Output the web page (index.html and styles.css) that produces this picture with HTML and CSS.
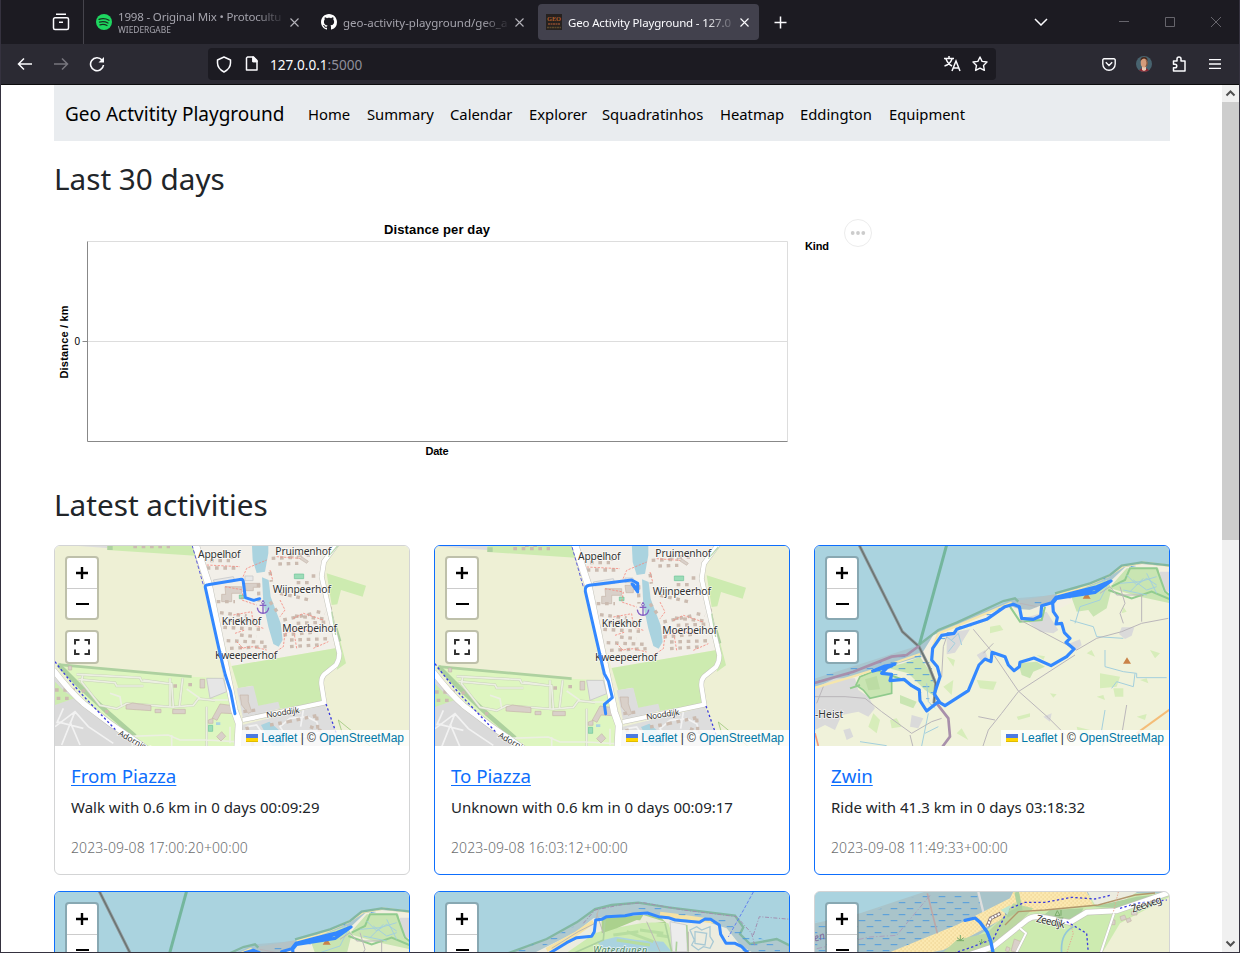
FILE: index.html
```html
<!DOCTYPE html>
<html lang="en">
<head>
<meta charset="utf-8">
<title>Geo Activity Playground</title>
<link rel="stylesheet" href="styles.css">
</head>
<body>
<svg class="defs" width="0" height="0" aria-hidden="true">
  <defs>
    <pattern id="tide" width="48" height="36" patternUnits="userSpaceOnUse"><path d="M2 8h20M26 26h20" stroke="#4294e0" stroke-width="2.6"/></pattern>
    <pattern id="dots" width="12" height="12" patternUnits="userSpaceOnUse"><path d="M2 3h2.5M8 9h2.5" stroke="#d9b56a" stroke-width="2.5"/></pattern>
    <symbol id="flag" viewBox="0 0 12 8"><path fill="#4C7BE1" d="M0 0h12v4H0z"/><path fill="#FFD500" d="M0 4h12v3H0z"/><path fill="#E0BC00" d="M0 7h12v1H0z"/></symbol>
    <symbol id="full" viewBox="0 0 16 16"><path d="M1 5.500V1h4.500M10.500 1H15v4.500M15 10.500V15h-4.500M5.500 15H1v-4.500" fill="none" stroke="#333" stroke-width="2"/></symbol>
    <symbol id="plus" viewBox="0 0 14 14"><path d="M7 1v12M1 7h12" stroke="#000" stroke-width="2.4"/></symbol>
    <symbol id="minus" viewBox="0 0 14 14"><path d="M1 7h13" stroke="#000" stroke-width="2"/></symbol>

    <g id="village">
      <path fill="#eef0d5" d="M0 0h1100v640H0z"/>
      <path fill="#dcdcdc" d="M0 0h172v24L0 12z"/>
      <path fill="#cdebb0" d="M172 0h258l18 48-276-18z"/>
      <path fill="#aed1a0" d="M172 16h16v14h-16z"/>
      <path class="b" d="M250 20h110M285 10h50"/>
      <path fill="#f2efe9" d="M435 0h430l-43 60-7 50 20 90 20 125-310 53-80-250z"/>
      <path fill="#cdebb0" d="M545 378l310-53 22 25-17 25-40 35 5 75-140 22-65-10-15-60-40 8z"/>
      <path fill="#cdebb0" d="M830 100l118 37-10 33-65-20-11 43-17 2zM870 300l18 70-28 20 8-40z"/>
      <path fill="#aed1a0" d="M862 262l12 40-8 5-10-40z"/>
      <path fill="#def6c0" d="M20 372l400 38 110 5 30 110-4 120H300L160 540 80 450z"/>
      <path d="M25 374l400 36" stroke="#aed1a0" stroke-width="8" fill="none"/>
      <path d="M25 374l70 70 80 75 80 70" stroke="#add19e" stroke-width="14" fill="none"/>
      <path fill="#dadada" d="M0 400l80 70 90 72 120 98H0z"/>
      <path fill="#cdebb0" d="M15 425l30 30 28 20-58 20z"/>
      <path fill="#ddd" d="M560 445l50-8 15 60 60-12 5 20-110 35zM575 555l250-60 30 75 25 70H570z"/>
      <path fill="#e6e6e6" stroke="#ccc" stroke-width="3" d="M470 415h50l10 40-50 20z"/>
      <path fill="none" stroke="#8cc068" stroke-width="2" d="M865 540l110 90M865 540l15 50"/>
      <path fill="#aad3df" d="M605 0h50v40l-10 55-25 4-12-39zM636 112l20 8 6 50 30 80 6 50-12 20-16-8-15-52-15-70zM633 555l25-10 40 35 10 60h-30z"/>
      <path fill="#9cdcb8" stroke="#6cc498" stroke-width="2" d="M733 102h28v14h-28zM568 165h14v11h-14zM475 556h13v18h-13z"/>
      <path fill="#aad3df" d="M498 547h13v8h-13zM648 198h10v9h-10z"/>
      <path class="pathcase" d="M80 403l190 10 5 10 90 8 5 70-140-10-30 15-50-10-55-70 3-22M85 418l110 10 5 10 80 0M280 420l70 10M360 415v85M398 415l-10 85M370 501l60-5 15-20 50 5M470 500v118"/>
      <path class="path" d="M80 403l190 10 5 10 90 8 5 70-140-10-30 15-50-10-55-70 3-22M85 418l110 10 5 10 80 0M280 420l70 10M360 415v85M398 415l-10 85M370 501l60-5 15-20 50 5M450 475l-40-28M180 460l30 10 5 30M470 500v118M215 590l140-5 35 15 80 0 85 5M490 480l50 0M247 585v35M365 585v35M540 560v50"/>
      <path class="lane" d="M15 560l60-45 40 45 75 50M40 505l-20 45M75 515l-40 100M20 545l80 20M60 545l30 70M590 560l30-5 20 30 5 40M690 560l30-25 50-5 30 15 10 30-30 15h-70zM760 510l-8 50"/>
      <path fill="#d9d0c9" stroke="#c5b5a9" stroke-width="2" d="M510 492l40 5-2 24-35-2-12 22-14-7zM228 495l20-6 55 8v15l-75-5zM315 508h18v10h-18zM368 508h38v13h-38zM450 418h14v26h-14zM525 140h50v20h-30v25h-30v-22h12zM585 130h45v12h-20v10h-22zM570 465h25v20l10 30-10 5-20-25zM755 50l20 14-5 6-20-13zM475 540l14-5v15h-14zM500 590l15-15 12 14-14 14zM55 378h10v12H55z"/>
      <path fill="#e8e8e8" stroke="#cfcfcf" stroke-width="3" d="M490 120l60-10 5 14-60 8zM585 108h24v14h-24z"/>
      <path class="b" d="M470 84h100M480 62h60M515 48l50 5M665 55l80-3M685 72l60-2M740 128h50M785 108h20M720 45h60M500 185h55M625 130l2 55M660 185l25 35M510 218l80 10M520 262l110 6M530 302l115 5M540 325l110-5M550 350l30-3M535 240l80 0M700 285l90-8M735 228l100 10M740 250l105-4M720 300l120-4M720 320l100-6M570 285l50 5M690 160l90 20M840 200l6 45M800 215l25 5M660 95l4 30M700 240l90-20"/>
      <path class="r" d="M470 75l100 5M575 120l15-35 60-25M525 140l55 10-5 30 45 15M690 180l15 30-15 20M550 225l55-10 5 40 30 10M555 280l30-10M570 325l40-5 40 10M670 340l30-20 5-40 60-15M730 235l30-15 60 20M740 325l-10-60 70 10M790 325l45-20M680 50l70 5M660 90l8 30M580 325l-20-20"/>
      <path class="b" d="M590 560l20 60M660 555l55-10M715 545l85-18M780 560l40 15M800 530l5 50M580 515l40-5M15 450h60M20 475h40M95 455l20-10M165 515h10M370 438h16M415 434h12"/>
      <path class="casing" style="stroke-width:23" d="M432 0l43 130 78 380 14 40-5 90"/>
      <path class="casing" style="stroke-width:16" d="M870 0l-48 65-7 45 20 90 33 140q0 20-10 35l-35 28q-12 12-8 35l8 50-245 52"/>
      <path class="casing" style="stroke-width:19" d="M10 390q50 65 90 100l80 60 130 90"/>
      <path class="way" style="stroke-width:20" d="M432 0l43 130 78 380 14 40-5 90"/>
      <path class="way" style="stroke-width:13" d="M870 0l-48 65-7 45 20 90 33 140q0 20-10 35l-35 28q-12 12-8 35l8 50-245 52"/>
      <path class="way" style="stroke-width:16" d="M10 390q50 65 90 100l80 60 130 90"/>
      <path class="cycle" d="M15 365q45 60 90 108l95 100M828 492l35 100"/>
      <path class="cycle thin" d="M422 0l38 135"/>
      <path d="M865 15l-30 35M845 215l12 70" stroke="#add19e" stroke-width="4" opacity=".8" fill="none"/>
      <path d="M639 192v27M622 203q2 16 17 17 15-1 17-17M629 196h20M639 180v5" fill="none" stroke="#8461c4" stroke-width="4"/><circle cx="639" cy="188" r="4" fill="none" stroke="#8461c4" stroke-width="3"/>
      <g class="lab"><text x="444" y="55" textLength="128">Appelhof</text><text x="676" y="45" textLength="168">Pruimenhof</text><text x="668" y="159" textLength="175">Wijnpeerhof</text><text x="515" y="255" textLength="119">Kriekhof</text><text x="697" y="277" textLength="164">Moerbeihof</text><text x="495" y="357" textLength="187">Kweepeerhof</text></g>
      <g class="lab small"><text transform="translate(650 534) rotate(-9)" textLength="100">Nooddijk</text><text transform="translate(203 585) rotate(29)">Adornisdijk</text></g>
    </g>

    <g id="coast">
      <path fill="#aad3df" d="M0 0h1100v640H0z"/>
      <path fill="#a9c6cf" d="M0 420l330-105 60-45 225-95 120-10 165-57 35-30 60-10 105 8v30L0 460z"/>
      <path fill="#b4c3c6" d="M620 183l115-20 10 20-100 30z"/>
      <path fill="#f2efe0" d="M0 445l130-35 200-60 40-65 65-25 160-65 50 20 90-35 160-50 50-48 50-10 110 10v560H0z"/>
      <path fill="#f0f2da" d="M0 455l350-90 40-80 210-80 130 10 160-80 220 20v480H0z"/>
      <path fill="#dadada" d="M15 445l60-30 60 0 10 35 30 20 20 35-20 25-30-15-50 10-20 45-30-15-30 15zM410 280l70-12-25 40-20 30-25 5zM640 235l70-20 35 55-15 10-40-5zM935 262l38 0-8 25-20 10-18-15zM500 345l25-15 10 30-20 5zM700 530l25-10-5 25zM100 570l20-5 10 25-20 10zM305 525l35 10-15 30-25-5zM780 310l30-12 5 18-30 25zM1050 95h40v60h-40z"/>
      <path fill="#c9e5b2" stroke="#8fca8c" stroke-width="5" d="M150 410l50-20 45 15v55l-65 15-20-25-22-15z"/>
      <path fill="#bcdca4" d="M165 418l35-10 10 40-35 3z"/>
      <path fill="#c9e5b2" d="M230 382l50-12 50-20 40 60 5 60-30-20-50-50-60-15zM270 465l50 20-10 20-40-15zM625 370l55-5 25 15-35 15-10 20-25-10zM780 160l110-40 15 25-15 60-40 25-15-20-35 5zM910 130l40-45 95 0 15 70 20 15v20l-90-20-90-25z"/>
      <path fill="none" stroke="#92cc8f" stroke-width="6" d="M905 140l40-20 15-35 80 0 25 70 20 15v10l-60-25-60 20-70-25M600 200l30 45 65-5 10-40M120 445l30-10M240 405l40 15 50 30"/>
      <path fill="#d7edba" d="M870 400l60 10-10 30-50 5zM910 445h30v25h-25zM400 440l30-20-5 45zM190 520l20 20-10 40-25-20zM500 420l60 5-10 25-40-5zM620 530l40-10v10l-35 10zM440 580l15-15 20 35zM830 340l15-10 10 20zM1020 330l30 10-15 15zM800 560l40 10-5 15-30-5zM720 460l20 3-10 10zM940 200l10 15-15 5zM540 260l30-5 10 15-40 10zM240 540l20-5 15 25-30 5zM860 470l20-5 5 15zM990 420l20-5 5 15zM980 530l30-8-5 18zM680 345l25 4-5 10zM410 350l25 10-5 20z"/>
      <path d="M0 448l130-39 70-22 130-45M365 330l20-50 50-20 170-72M740 165l60-15 95-42 45-30 60-10 100 12" fill="none" stroke="#f5e6ac" stroke-width="7"/>
      <path d="M330 312l55-42 55-22 140-65 35-8 10 10M735 160l105-30 60-25 35-28 60-10 90 10" fill="none" stroke="#82b8a3" stroke-width="7"/>
      <path fill="url(#tide)" d="M230 360l130-20 12 90-10 90-15-50-50-50-60-20zM0 415l330-88 10 20-340 90zM380 290l230-105 15 5-225 110zM640 195l95-25 10 10-90 20zM860 128l80-48 50-10v6l-50 10-60 45z"/>
      <path d="M140 0l137 275 50 45 30 60 20 50-5 60" fill="none" stroke="#8f9598" stroke-width="9"/>
      <path d="M140 0l137 275 50 45 30 60 20 50-5 60" fill="none" stroke="#65716e" stroke-width="3.500"/>
      <path d="M414 0l-86 315" stroke="#74b69d" stroke-width="9" fill="none"/>
      <path d="M0 433l130-38 115-45 45-5 37-27M380 490l35 45 5 55-30 40" fill="none" stroke="#a890ab" stroke-width="8"/>
      <path class="riv" d="M795 250l15-50 60-20 20-40-10-20M780 240l70 20 10 30 80 5M885 330l0 50 55 15 40 5v13l90 0M975 400l-5 40-50-15-15 20M410 290l25 20-20 25M425 300l20-20 10 35M350 430l5 55 20 20M150 605l80 12M345 580l40-20M355 520l-20 98M885 510l-10 60 10 30-15 30M950 105l30 30 30-20 30 20M970 120l40 30 30-10M930 130l60-5 50-15M960 155l40-40M940 150l70 15M1010 100l30 60"/>
      <path class="rd" d="M490 268l50 60 85 125 90 80 60 60M630 190l50 10M630 240l170 90 60-35 75-20 60-25 80-15M920 165l-20-25-30 20M920 165l75 0 0 80M940 250l-10-30 15-30-15-50M795 345l-170 110-50 65-40 50-20 60M40 440l-20 50M15 470l90 0 60 5 50 40 90 65 60-35 30-10M300 585l10 40M555 540l-50-10M950 495l-20 120M410 290l-10 30-5 90M520 340l30-30"/>
      <path d="M980 580l100-72" stroke="#f4bd78" stroke-width="6"/><path d="M15 580l10 38" stroke="#ee9a80" stroke-width="5"/>
      <path fill="#ca8348" d="M818 176l12-19 12 19zM939 371l12-19 12 19z"/>
      <text class="lab" x="15" y="533" textLength="85">-Heist</text>
    </g>
    <path id="zwinroute" class="route" style="stroke-width:9.500" d="M188 393L225 378 255 372 232 382 215 400 245 403 240 422 282 418 305 437 328 450 330 482 350 513 385 485 405 497 475 452 507 375 525 357 543 365 546 337 585 350 595 375 612 392 628 380 630 367 672 354 723 377 770 350 792 327 768 307 780 295 763 278 755 250 738 252 742 232 730 215 728 190 740 175 855 157 903 123 860 140 800 155 738 172 725 188 695 197 692 228 670 238 635 235 628 200 610 193 585 200 530 238 440 268 432 280 395 286 368 325 365 360 382 380 390 410 373 462 388 485M780 170L850 147 900 125M190 393L245 378"/>

    <g id="dunes">
      <path fill="#aad3df" d="M0 50h1100v620H0z"/>
      <path fill="#b0c9cf" stroke="#82b8a3" stroke-width="7" d="M220 255l130-48 90-50 55-40 50-12 80-7 90 14 200 25 25 35-10 20 30 30 80-15 40 20v60H220z"/>
      <path fill="#ececdf" d="M300 255l140-70 50-40 60-5 100-10 60 15 120 10 60 20 40 50 50 30z"/>
      <path fill="none" stroke="#f5e2a4" stroke-width="13" d="M350 240l90-50 50-35M690 132l50 6 110 16"/>
      <path fill="#cdebb0" d="M400 255l95-65 30-10 130-25 60 5 20 60v35z"/>
      <path fill="#abd18d" d="M515 145l120-10 50 0 25 25-90-10-60 25-45 15z"/>
      <path fill="#e8ead8" d="M640 135l65 20-80 5z"/>
      <path fill="#aad3df" d="M500 215l60-15 60 10 80 5 25 30H530z"/>
      <path fill="none" stroke="#b7dda0" stroke-width="9" d="M550 195l75-10M560 210l100 15M630 180l70 10M590 185l80 30M680 195l35 5"/>
      <path fill="#ececec" stroke="#cecece" stroke-width="3" d="M720 155l50 10 2 80h-45z"/>
      <path fill="none" stroke="#a9c9d4" stroke-width="4" d="M780 180l20-10 15 10 25-10 0 30 10 15-10 20-20-5-15 10-20-15 8-15zM795 185l35 5-5 35-30-5z"/>
      <path fill="none" stroke="#add19e" stroke-width="5" d="M705 160l20 85M770 165l5 80M525 150l-5 60-90 40M740 215l-2 30"/>
      <path fill="none" stroke="#bcb9b4" stroke-width="3" d="M500 130l20 60M650 155l40 90M775 185v60M505 120l-10 40-50 25-80 50"/>
      <path fill="url(#tide)" d="M240 245l110-35 100-50 40-30v14l-50 30-90 50-90 30zM560 110l80-5 100 18 140 20 60 50 10-10 100 50v15H940l-60-90-150-25-100-15z"/>
      <path fill="none" stroke="#a28fb0" stroke-width="3" stroke-dasharray="12 5 3 5" d="M460 160l35-40 85-17 60-5 120 22 160 20 45 50 10 40M970 195l18-55 95 8"/>
      <path fill="none" stroke="#6280ef" stroke-width="3" stroke-dasharray="10 5" d="M970 66l-30 55-45 80"/>
      <path class="route" style="stroke-width:9" d="M350 255L410 218 440 203 485 199 493 185 497 150 515 148 530 140 585 137 610 132 652 129 685 140 715 143 735 150 808 157 825 147 842 148 868 165 872 193 888 220 915 220 935 230 960 255"/>
      <text class="lab water" x="490" y="248" textLength="162">Waterdunen</text>
    </g>

    <g id="beach">
      <path fill="#a9c4ca" d="M0 50h1100v620H0z"/><path fill="#aad3df" d="M0 50h390L150 130 15 160z"/>
      <path fill="url(#tide)" d="M15 155l130-15 210-75h150l20 60-110 60-100 70H15z"/>
      <path fill="#cdebb0" d="M530 180l80-60 250-50h220v190H400z"/>
      <path fill="#fbe8b0" d="M220 255l60-25 160-65 60-30 100-50 10-20h220l20 40-180 20-70 10-150 80-50 25-80 15z"/>
      <path fill="url(#dots)" d="M220 255l60-25 160-65 60-30 100-50 10-20h220l20 40-180 20-70 10-150 80-50 25-80 15z"/>
      <path fill="#bdd8a2" d="M440 210l90-20 50-50 30-40 60 15-60 60-80 80H390z"/>
      <path fill="#ececdf" d="M830 60h160l-60 40-75 5z"/><path fill="#eef0d5" d="M930 160l150-80v180H870z"/>
      <path fill="#add19e" d="M720 120l100-5-15 35-70 10-40-20zM850 110l130-30 100-10-150 45z"/>
      <path fill="none" stroke="#add19e" stroke-width="14" d="M620 66l10 50-40 20"/>
      <path fill="none" stroke="#b2976c" stroke-width="4" d="M585 165l40-40 80-5 160-15 110-30 60-6"/>
      <path fill="#d9d0c9" stroke="#c5b5a9" stroke-width="2" d="M613 207l20 8-12 32-18-4zM930 140l14-5 5 12-15 5zM965 125h16v10h-16zM905 150h10v14h-10zM948 148l12-5 4 10-12 5zM590 230l10 4-4 12-10-4z"/>
      <path fill="none" stroke="#bda7a7" stroke-width="5" d="M352 70l30 120"/>
      <path fill="none" stroke="#dedede" stroke-width="7" d="M505 66l15 60"/>
      <path fill="none" stroke="#aca0bd" stroke-width="3" stroke-dasharray="16 6 4 6" d="M360 76l-50 60-50 60-80 5-160 35"/>
      <path class="casing" style="stroke-width:19" d="M460 260l90-30 100-80q20-15 50-8l80 15 50-30 90-5 160-55"/>
      <path class="way" style="stroke-width:15" d="M460 260l90-30 100-80q20-15 50-8l80 15 50-30 90-5 160-55"/>
      <path class="casing" style="stroke-width:9" d="M912 130l-40 120M630 175l18 15-30 60"/><path class="way" style="stroke-width:6" d="M912 130l-40 120M630 175l18 15-30 60"/>
      <path fill="none" stroke="#8a7777" stroke-width="11" d="M532 170l10-25 30-15"/><path fill="none" stroke="#fff" stroke-width="6" stroke-dasharray="7 3" d="M532 170l10-25 30-15"/>
      <path class="cycle" d="M390 262l80-25 80-30 45-90 50-20 60 0 80-15 70 5 50-12M930 115l50-15 90-10M770 155l60 35 5 60"/>
      <path fill="none" stroke="#93c7d8" stroke-width="5" d="M790 170q-40 20-35 80"/><path fill="none" stroke="#e5a792" stroke-width="3" stroke-dasharray="4 4" d="M780 160l10 30-20 60M925 66l-15 60"/>
      <path fill="#bde6cf" d="M572 120l30-15-10 30z"/>
      <path fill="none" stroke="#7aab69" stroke-width="3" d="M451 195v17M441 203l10 8 10-8M440 212h22M515 207v15M507 213l8 7 8-7M735 137l7-15 8 15zM738 144h22M753 137v-17"/>
      <path class="route" style="stroke-width:10" d="M465 151l30-7 15 13 22 30 10 25 8 40"/>
      <text class="lab" transform="translate(677 155) rotate(13)" textLength="88">Zeedijk</text><text class="lab" transform="translate(968 128) rotate(-19)" textLength="95">Zeeweg</text><text class="lab sea" transform="translate(15 215) rotate(-17)">en</text>
    </g>
  </defs>
</svg>

<div class="window">
  <header class="tabs">
    <div class="view"><svg width="18" height="18" viewBox="0 0 18 18" fill="none" stroke="#fbfbfe" stroke-width="1.5"><path d="M4 1.200h10M3 4.800h12a1.500 1.500 0 0 1 1.500 1.500v8.700a1.500 1.500 0 0 1-1.500 1.500H3A1.500 1.500 0 0 1 1.500 15V6.300A1.500 1.500 0 0 1 3 4.800zM7 9.300h4"/></svg></div>
    <div class="tab t1">
      <svg width="16" height="16" viewBox="0 0 16 16"><circle cx="8" cy="8" r="8" fill="#1ed760"/><path d="M3 5.300q5.500-1.600 10 .9M3.500 8.100q4.500-1.300 8.500.9M4 10.800q4-1 7 .7" stroke="#17301f" stroke-width="1.300" fill="none" stroke-linecap="round"/></svg>
      <div class="label fade"><span class="l1">1998 - Original Mix • Protocultu</span><small>WIEDERGABE</small></div>
      <svg class="x" width="9" height="9" viewBox="0 0 9 9"><path d="M.5.500l8 8M8.500.500l-8 8"/></svg>
    </div>
    <div class="tab t2">
      <svg width="16" height="16" viewBox="0 0 16 16"><path fill="#fff" d="M8 0C3.580 0 0 3.580 0 8c0 3.540 2.290 6.530 5.470 7.590.4.070.55-.17.55-.38 0-.19-.01-.82-.01-1.490-2.010.37-2.530-.49-2.690-.94-.09-.23-.48-.94-.82-1.130-.28-.15-.68-.52-.01-.53.63-.01 1.080.58 1.230.82.72 1.210 1.870.87 2.330.66.070-.52.280-.87.510-1.070-1.780-.2-3.640-.89-3.640-3.950 0-.87.310-1.590.82-2.150-.08-.2-.36-1.020.08-2.120 0 0 .67-.21 2.200.82.640-.18 1.320-.27 2-.27s1.360.09 2 .27c1.530-1.040 2.200-.82 2.200-.82.44 1.100.16 1.920.08 2.120.51.56.82 1.270.82 2.150 0 3.070-1.870 3.750-3.650 3.950.29.25.54.73.54 1.480 0 1.070-.01 1.930-.01 2.200 0 .21.150.46.550.38A8.010 8.010 0 0 0 16 8c0-4.420-3.580-8-8-8z"/></svg>
      <div class="label fade"><span class="l2">geo-activity-playground/geo_a</span></div>
      <svg class="x" width="9" height="9" viewBox="0 0 9 9"><path d="M.5.500l8 8M8.500.500l-8 8"/></svg>
    </div>
    <div class="tab t3">
      <svg width="16" height="16" viewBox="0 0 16 16"><path fill="#26211f" d="M0 0h16v16H0z"/><text x="1" y="6.800" class="fav" textLength="14" lengthAdjust="spacingAndGlyphs">GEO</text><path d="M2 10h12" stroke="#70402a" stroke-width="2" stroke-dasharray="2 .5"/><path d="M1 13.500h14" stroke="#5b4a2c" stroke-width="1.500" stroke-dasharray="2 .5"/></svg>
      <div class="label fade"><span class="l3">Geo Activity Playground - 127.0</span></div>
      <svg class="x on" width="9" height="9" viewBox="0 0 9 9"><path d="M.5.500l8 8M8.500.500l-8 8"/></svg>
    </div>
    <svg class="new" width="13" height="13" viewBox="0 0 13 13"><path d="M6.500.500v12M.5 6.500h12" stroke="#fbfbfe" stroke-width="1.500"/></svg>
    <div class="winbtns">
      <svg width="14" height="8" viewBox="0 0 14 8" fill="none" stroke="#fbfbfe" stroke-width="1.500"><path d="M1 1l6 6 6-6"/></svg>
      <svg width="10" height="10" viewBox="0 0 10 10" stroke="#66656c"><path d="M0 4.500h10"/></svg>
      <svg width="10" height="10" viewBox="0 0 10 10" fill="none" stroke="#66656c"><path d="M.5.500h9v9h-9z"/></svg>
      <svg width="10" height="10" viewBox="0 0 10 10" stroke="#66656c"><path d="M0 0l10 10M10 0L0 10"/></svg>
    </div>
  </header>
  <div class="toolbar">
    <div class="navs">
      <svg width="16" height="14" viewBox="0 0 16 14" fill="none" stroke="#fbfbfe" stroke-width="1.500"><path d="M15 7H1.500M7 1.500L1.500 7 7 12.500"/></svg>
      <svg width="16" height="14" viewBox="0 0 16 14" fill="none" stroke="#77767e" stroke-width="1.500"><path d="M1 7h13.500M9 1.500L14.500 7 9 12.500"/></svg>
      <svg width="16" height="16" viewBox="0 0 16 16" fill="none" stroke="#fbfbfe" stroke-width="1.600"><path d="M13 4A6.500 6.500 0 1 0 14.500 9"/><path d="M15 1v5.500H9.500z" fill="#fbfbfe" stroke="none"/></svg>
    </div>
    <div class="url">
      <svg width="16" height="17" viewBox="0 0 16 17" fill="none" stroke="#fbfbfe" stroke-width="1.500" stroke-linejoin="round"><path d="M8 1l6.500 3v3q0 5.500-6.500 9Q1.500 12.500 1.500 7V4z"/></svg>
      <svg width="14" height="16" viewBox="0 0 14 16" fill="none" stroke="#fbfbfe" stroke-width="1.500" stroke-linejoin="round"><path d="M2.500 1h6L12 4.500V14H1.500V2zM8 1v4.500h4"/><path d="M8 1l4 4.500H8z" fill="#fbfbfe"/></svg>
      <span class="host">127.0.0.1<i>:5000</i></span>
      <svg class="tr" width="17" height="16" viewBox="0 0 17 16" fill="none" stroke="#fbfbfe" stroke-width="1.500"><path d="M0 2.500h10M5 0v2.500M2 3q2 5 6 7M8 3Q6 8.500 .5 10M8 15l4-10 4 10M9.500 12h5"/></svg>
      <svg width="16" height="16" viewBox="0 0 16 16" fill="none" stroke="#fbfbfe" stroke-width="1.400" stroke-linejoin="round"><path d="M8 1l2.100 4.400 4.900.6-3.500 3.400.9 5L8 12.100l-4.400 2.300.9-5L1 6l4.900-.6z"/></svg>
    </div>
    <div class="tools">
      <svg width="14" height="13" viewBox="0 0 14 13" fill="none" stroke="#fbfbfe" stroke-width="1.400"><path d="M2 .800h10a1.200 1.200 0 0 1 1.200 1.200v4a6.200 6.200 0 0 1-12.400 0V2A1.200 1.200 0 0 1 2 .800zM3.800 4.300L7 7.500l3.200-3.200"/></svg>
      <svg width="16" height="16" viewBox="0 0 16 16"><circle cx="8" cy="8" r="8" fill="#48636f"/><path d="M3 14.200Q5 12 8 12t5 2.200Q8 17.500 3 14.200z" fill="#8c2630"/><path d="M6 10h4v4l-2 1-2-1z" fill="#e8c9b4"/><ellipse cx="8" cy="6.800" rx="3.300" ry="4.800" fill="#d69c7b"/><path d="M4.500 5Q4 1 8 1t3.500 4Q10 2.500 8 2.500T4.500 5z" fill="#4a2b20"/><path d="M9 3q3 4 0 8 4-1 2.300-6z" fill="#835239"/></svg>
      <svg width="15" height="16" viewBox="0 0 15 16" fill="none" stroke="#fbfbfe" stroke-width="1.500" stroke-linejoin="round"><path d="M1.500 5H5V3a2 2 0 0 1 4 0v2h4v10H1.500v-3.200H3a1.800 1.800 0 0 0 0-3.600H1.500z"/></svg>
      <svg width="12" height="10" viewBox="0 0 12 10" stroke="#fbfbfe" stroke-width="1.300"><path d="M0 .700h12M0 5h12M0 9.300h12"/></svg>
    </div>
  </div>
  <div class="viewport">
    <main class="page">
      <nav class="nav"><a class="brand">Geo Actvitity Playground</a><a style="width:43px">Home</a><a style="width:67px">Summary</a><a style="width:63px">Calendar</a><a style="width:57px">Explorer</a><a style="width:102px">Squadratinhos</a><a style="width:64px">Heatmap</a><a style="width:73px">Eddington</a><a style="width:77px">Equipment</a></nav>
      <h2>Last 30 days</h2>
      <svg class="chart" width="830" height="260" viewBox="0 0 830 260">
        <path d="M33.500 138.500h700M33.500 38.500h700v200" fill="none" stroke="#ddd"/>
        <path d="M33.500 38.500v200h700M28.500 138.500h5" fill="none" stroke="#888"/>
        <text class="ct" x="383" y="31" text-anchor="middle" textLength="106">Distance per day</text>
        <text class="ca" x="383" y="252" text-anchor="middle" textLength="23">Date</text>
        <text class="ca" transform="translate(14 139) rotate(-90)" text-anchor="middle" textLength="73">Distance / km</text>
        <text class="cn" x="26" y="142" text-anchor="end">0</text>
        <text class="ca" x="751" y="47" textLength="24">Kind</text>
        <circle cx="804" cy="30" r="13.500" fill="#fff" stroke="#ececec"/><g fill="#ccc"><circle cx="798.700" cy="30" r="1.900"/><circle cx="804" cy="30" r="1.900"/><circle cx="809.300" cy="30" r="1.900"/></g>
      </svg>
      <h2 class="second">Latest activities</h2>
      <div class="grid">
        <article class="card plain">
          <div class="map"><svg viewBox="15 18 1062 600"><use href="#village"/><path class="route" d="M555 521l-13-66-16-50-8-32-12-50-40-180q-2-8 8-9l100-16q5 0 6 8l6 47 25 8 18-5"/></svg>
            <div class="zoom"><b><svg width="14" height="14"><use href="#plus"/></svg></b><b><svg width="14" height="14"><use href="#minus"/></svg></b></div><div class="zoom fs"><b><svg width="16" height="16"><use href="#full"/></svg></b></div>
            <div class="attr"><svg width="12" height="8"><use href="#flag"/></svg> <a>Leaflet</a> | © <a>OpenStreetMap</a></div></div>
          <div class="body"><h5><a>From Piazza</a></h5><p>Walk with 0.6 km in 0 days 00:09:29</p><small>2023-09-08 17:00:20+00:00</small></div>
        </article>
        <article class="card">
          <div class="map"><svg viewBox="15 18 1062 600"><use href="#village" y="6"/><path class="route" d="M527 521l-4-28 24-20-12-50-12-22-14-60-43-187q-2-16 12-18l127-16 18 10 0 26-17-24 6 4 8 15"/></svg>
            <div class="zoom"><b><svg width="14" height="14"><use href="#plus"/></svg></b><b><svg width="14" height="14"><use href="#minus"/></svg></b></div><div class="zoom fs"><b><svg width="16" height="16"><use href="#full"/></svg></b></div>
            <div class="attr"><svg width="12" height="8"><use href="#flag"/></svg> <a>Leaflet</a> | © <a>OpenStreetMap</a></div></div>
          <div class="body"><h5><a>To Piazza</a></h5><p>Unknown with 0.6 km in 0 days 00:09:17</p><small>2023-09-08 16:03:12+00:00</small></div>
        </article>
        <article class="card">
          <div class="map"><svg viewBox="15 18 1062 600"><use href="#coast"/><use href="#zwinroute"/></svg>
            <div class="zoom"><b><svg width="14" height="14"><use href="#plus"/></svg></b><b><svg width="14" height="14"><use href="#minus"/></svg></b></div><div class="zoom fs"><b><svg width="16" height="16"><use href="#full"/></svg></b></div>
            <div class="attr"><svg width="12" height="8"><use href="#flag"/></svg> <a>Leaflet</a> | © <a>OpenStreetMap</a></div></div>
          <div class="body"><h5><a>Zwin</a></h5><p>Ride with 41.3 km in 0 days 03:18:32</p><small>2023-09-08 11:49:33+00:00</small></div>
        </article>
        <article class="card"><div class="map"><svg viewBox="15 18 1062 600"><use href="#coast"/><use href="#zwinroute"/></svg><div class="zoom"><b><svg width="14" height="14"><use href="#plus"/></svg></b><b><svg width="14" height="14"><use href="#minus"/></svg></b></div></div></article>
        <article class="card"><div class="map"><svg viewBox="15 66 1062 600"><use href="#dunes"/></svg><div class="zoom"><b><svg width="14" height="14"><use href="#plus"/></svg></b><b><svg width="14" height="14"><use href="#minus"/></svg></b></div></div></article>
        <article class="card plain"><div class="map"><svg viewBox="15 66 1062 600"><use href="#beach"/></svg><div class="zoom"><b><svg width="14" height="14"><use href="#plus"/></svg></b><b><svg width="14" height="14"><use href="#minus"/></svg></b></div></div></article>
      </div>
    </main>
    <div class="scroll">
      <svg width="17" height="17" viewBox="0 0 17 17"><path d="M4.500 10.500l4-4 4 4" fill="none" stroke="#505050" stroke-width="2"/></svg>
      <div class="thumb"></div>
      <svg class="down" width="17" height="17" viewBox="0 0 17 17"><path d="M4.500 6.500l4 4 4-4" fill="none" stroke="#505050" stroke-width="2"/></svg>
    </div>
  </div>
</div>
</body>
</html>
```
FILE: styles.css
```css
* { box-sizing: border-box; }
body { margin: 0; width: 1240px; height: 953px; overflow: hidden; font-family: "Noto Sans", sans-serif; color: #212529; }
svg { display: block; flex: none; }
.defs { position: absolute; }
.window { width: 1240px; height: 953px; border: solid #35323f; border-width: 0 1px 1px; display: flex; flex-direction: column; background: #1c1b22; }

.tabs { height: 44px; flex: none; display: flex; align-items: center; color: #a5a4ad; }
.view { width: 83px; height: 44px; border-right: 1px solid #45444c; display: flex; align-items: center; padding-left: 51px; }
.tab { display: flex; align-items: center; height: 36px; border-radius: 4px; font-size: 11.500px; white-space: nowrap; }
.label { display: flex; flex-direction: column; overflow: hidden; line-height: 16px; }
.label small { font-size: 8.400px; line-height: 10px; }
.fade { -webkit-mask-image: linear-gradient(90deg, #000 82%, transparent); mask-image: linear-gradient(90deg, #000 82%, transparent); }
.l1, .l3 { letter-spacing: -.16px; }
.l2 { letter-spacing: 0; }
.t1 { margin-left: 12px; width: 210px; gap: 6px; }
.t1 .label { width: 168px; padding-top: 0; margin-top: -1px; }
.t2 { margin-left: 15px; width: 204px; gap: 6px; }
.t2 .label { width: 168px; padding-top: 2px; }
.t3 { margin-left: 13px; width: 221px; padding-left: 8px; gap: 6px; background: #42414d; color: #fbfbfe; }
.t3 .label { width: 168px; padding-top: 2px; }
.fav { font: bold 7px "Liberation Serif", serif; fill: #b35f2b; }
.x { stroke: #b5b4bb; stroke-width: 1.100; fill: none; margin-left: -2px; }
.x.on { stroke: #fbfbfe; }
.new { margin-left: 15px; }
.winbtns { margin-left: auto; display: flex; align-items: center; padding-right: 18px; gap: 36px; }
.winbtns svg:first-child { margin-right: 35px; }

.toolbar { height: 41px; flex: none; background: #2b2a33; border-bottom: 1px solid #0c0c0d; display: flex; align-items: center; }
.navs { display: flex; align-items: center; gap: 20px; width: 207px; padding-left: 16px; }
.url { width: 788px; height: 32px; border-radius: 4px; background: #1c1b22; display: flex; align-items: center; padding: 0 8px; }
.url svg:nth-child(2) { margin-left: 13px; }
.host { margin-left: 11px; font-size: 13.600px; color: #fbfbfe; padding-top: 1px; }
.host i { font-style: normal; color: #8f8f9a; }
.tr { margin-left: auto; margin-right: 11px; }
.tools { margin-left: auto; display: flex; align-items: center; gap: 21px; padding-right: 18px; }
.tools svg:nth-child(-n+3) { margin-left: -1px; margin-right: 0; }
.tools svg:last-child { margin-left: 1px; }

.viewport { flex: 1; min-height: 0; display: flex; background: #fff; overflow: hidden; }
.page { margin-left: 53px; width: 1116px; flex: none; }
.nav { height: 56px; background: #e9ecef; display: flex; align-items: center; gap: 16px; padding: 2px 0 0 11px; font-size: 14.800px; color: #000; white-space: nowrap; }
.brand { font-size: 19px; width: 219px; margin-right: 8px; }
h2 { font-size: 29.700px; line-height: 38px; font-weight: 400; margin: 19px 0 5px; white-space: nowrap; }
.chart { height: 260px; }
.chart text { font-family: "Liberation Sans", Arial, sans-serif; fill: #000; }
.ct { font-size: 13px; font-weight: bold; }
.ca { font-size: 11px; font-weight: bold; }
.cn { font-size: 10px; }
.second { margin: 23px 0 21px; }
.grid { display: grid; grid-template-columns: repeat(3, 356px); grid-auto-rows: 330px; gap: 16px 24px; }
.card { border: 1px solid #0d6efd; border-radius: 6px; overflow: hidden; }
.card.plain { border-color: #d3d4d5; }
.map { position: relative; height: 200px; overflow: hidden; }
.map > svg { width: 354px; height: 200px; }
.zoom { position: absolute; left: 10px; top: 10px; width: 34px; border: 2px solid rgba(0,0,0,.2); border-radius: 4px; background-clip: padding-box; background-color: #fff; }
.zoom b { display: flex; align-items: center; justify-content: center; height: 30px; padding-right: 1px; }
.zoom b + b { border-top: 1px solid #ccc; }
.zoom.fs { top: 84px; }
.zoom.fs b { padding-right: 0; }
.attr { position: absolute; right: 0; bottom: 0; height: 16px; padding: 0 5px; background: rgba(255,255,255,.8); font: 12px/16px "Liberation Sans", Arial, sans-serif; color: #333; white-space: nowrap; }
.attr svg { display: inline-block; }
.attr a { color: #0078a8; }
.body { padding: 16px; display: flex; flex-direction: column; white-space: nowrap; }
h5 { margin: 0 0 7px; font-size: 18.700px; line-height: 24px; font-weight: 400; height: 26px; padding-top: 2px; }
h5 a { color: #0d6efd; text-decoration: underline; text-underline-offset: 2px; text-decoration-thickness: 1px; }
.body p { margin: 0 0 17px; font-size: 15px; line-height: 24px; }
.body small { font-size: 14px; line-height: 24px; color: #6c6e70; letter-spacing: .08px; font-weight: 350; }
.scroll { margin-left: auto; width: 17px; background: #f0f0f0; display: flex; flex-direction: column; }
.thumb { height: 438px; background: #cdcdcd; }
.down { margin-top: auto; }

.b { fill: none; stroke: #cbbbb0; stroke-width: 10; stroke-dasharray: 11 14; }
.r { fill: none; stroke: #f58a80; stroke-width: 2.500; stroke-dasharray: 7 4; }
.pathcase { fill: none; stroke: #c9d3b8; stroke-width: 8; }
.path { fill: none; stroke: #ecefe2; stroke-width: 5; }
.lane { fill: none; stroke: #f2f2f2; stroke-width: 5; }
.casing { fill: none; stroke: #c4c4bc; }
.way { fill: none; stroke: #fff; }
.cycle { fill: none; stroke: #3a3adf; stroke-width: 4; stroke-dasharray: 7 7; }
.thin { stroke-width: 3; stroke-dasharray: 10 6; opacity: .8; }
.riv { fill: none; stroke: #a3cfdd; stroke-width: 3; }
.rd { fill: none; stroke: #bab6ba; stroke-width: 3; }
.route { fill: none; stroke: #3388ff; stroke-width: 9; stroke-linejoin: round; stroke-linecap: round; }
.lab { font-family: "Noto Sans", sans-serif; font-size: 31px; fill: #333; stroke: rgba(255,255,255,.75); stroke-width: 4px; paint-order: stroke; }
.small { font-size: 25px; }
.water { font-style: italic; font-size: 27px; fill: #3f7f55; }
.sea { font-style: italic; fill: #7f6b9c; stroke: none; }
```
